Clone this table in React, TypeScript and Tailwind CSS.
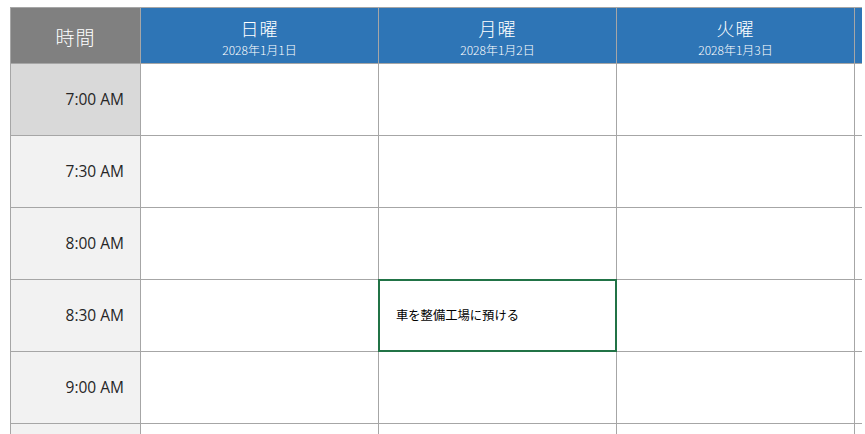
import React from "react";

const days = [
  { name: "日曜", date: "2028年1月1日" },
  { name: "月曜", date: "2028年1月2日" },
  { name: "火曜", date: "2028年1月3日" },
];

const times = ["7:00 AM", "7:30 AM", "8:00 AM", "8:30 AM", "9:00 AM", ""];

const font = { fontFamily: '"Noto Sans CJK JP", "Noto Sans", sans-serif' };

export default function App() {
  return (
    <div className="w-[865px] h-[434px] overflow-hidden bg-white" style={font}>
      <div className="pl-[10px] pt-[7px]">
        <div className="grid grid-cols-[129px_237px_237px_237px_7px] grid-rows-[55px_71px_71px_71px_71px_71px_71px] gap-[1px] bg-[#a6a6a6] pl-[1px] pt-[1px] w-[852px]">
          <div className="bg-[#808080] flex items-center justify-center text-white text-[19px] leading-none tracking-[1px] font-light pt-[2px]">
            時間
          </div>
          {days.map((d) => (
            <div key={d.name} className="bg-[#2e75b6] flex flex-col items-center text-white pt-[9px] font-light">
              <div className="text-[18px] leading-[22px] tracking-[1px]">{d.name}</div>
              <div className="text-[12px] leading-[14px] mt-[4px]">{d.date}</div>
            </div>
          ))}
          <div className="bg-[#2e75b6]" />
          {times.map((t, i) => (
            <React.Fragment key={i}>
              <div
                className={`${i === 0 ? "bg-[#d9d9d9]" : "bg-[#f2f2f2]"} flex items-center justify-end pr-[16px] text-[15.5px] text-[#262626]`}
                style={{ fontFamily: '"Open Sans", "Noto Sans", sans-serif' }}
              >
                {t}
              </div>
              <div className="bg-white" />
              <div className="bg-white relative">
                {i === 3 && (
                  <div className="absolute -left-[1px] -top-[1px] w-[239px] h-[73px] border-2 border-[#217346] flex items-center pl-[16px] text-[12.3px] text-black">
                    車を整備工場に預ける
                  </div>
                )}
              </div>
              <div className="bg-white" />
              <div className="bg-white" />
            </React.Fragment>
          ))}
        </div>
      </div>
    </div>
  );
}
